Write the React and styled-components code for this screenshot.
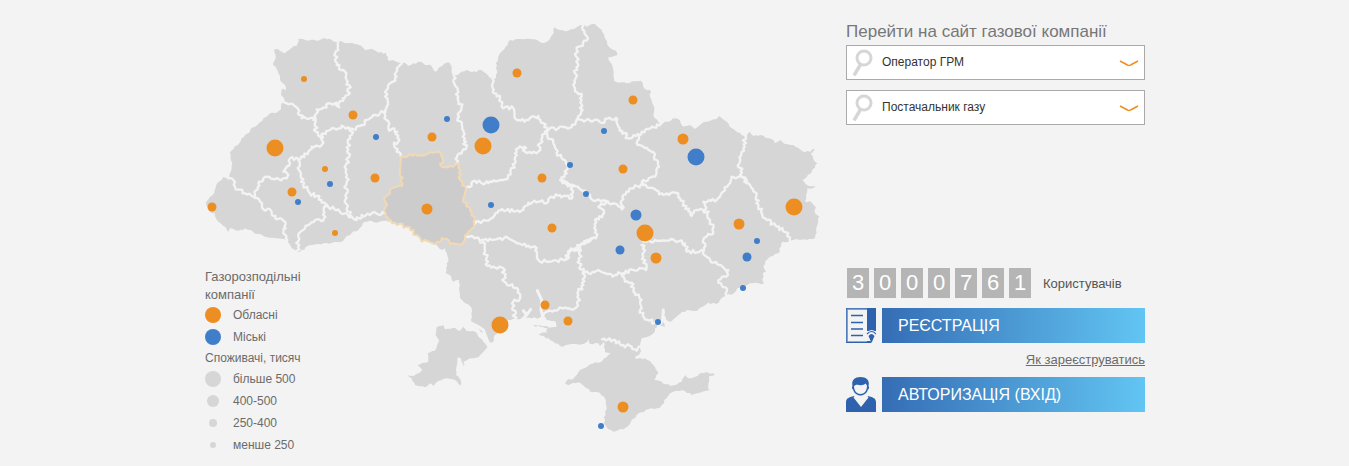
import React from "react";
import styled, { createGlobalStyle } from "styled-components";

const GlobalStyle = createGlobalStyle`
  * { box-sizing: border-box; }
  body {
    margin: 0;
    background: #f3f3f3;
    color: #6b6b6b;
    font-family: "Liberation Sans", Arial, sans-serif;
    font-size: 12px;
  }
`;

const Page = styled.main`
  display: grid;
  grid-template-columns: minmax(0, 616px) 299px;
  justify-content: space-between;
  max-width: 941px;
  margin: 0 auto;
  padding: 20px 0 10px;
`;

const MapPanel = styled.section`
  display: grid;
  align-items: start;
`;

const MapSvg = styled.svg`
  grid-area: 1 / 1;
  width: 100%;
  height: auto;
  margin-bottom: 16px;
`;

const Legend = styled.div`
  grid-area: 1 / 1;
  align-self: end;
  justify-self: start;
  width: 112px;
  padding-left: 1px;
`;

const LegendTitle = styled.h2`
  margin: 0;
  font-size: ${(p) => (p.$small ? 12 : 13)}px;
  font-weight: 400;
  line-height: ${(p) => (p.$small ? 20 : 18)}px;
`;

const LegendList = styled.ul`
  list-style: none;
  margin: 0;
  padding: 0;
`;

const LegendRow = styled.li`
  display: flex;
  align-items: center;
  gap: 12px;
  height: 22px;
  white-space: nowrap;
`;

const DotCell = styled.span`
  display: flex;
  justify-content: center;
  width: 16px;
`;

const Dot = styled.span`
  width: ${(p) => p.$size}px;
  height: ${(p) => p.$size}px;
  border-radius: 50%;
  background: ${(p) => p.$color};
`;

const Side = styled.aside`
  display: flex;
  flex-direction: column;
  justify-content: space-between;
  padding-bottom: 44px;
`;

const Pickers = styled.div`
  display: flex;
  flex-direction: column;
  gap: 10px;
`;

const Heading = styled.h1`
  margin: 0 0 -8px;
  font-size: 17px;
  font-weight: 400;
  line-height: 23px;
  color: #777;
  white-space: nowrap;
`;

const Picker = styled.label`
  display: grid;
  grid-template-columns: 36px 1fr 26px;
  align-items: center;
`;

const PickerSelect = styled.select`
  grid-area: 1 / 1 / 2 / 4;
  appearance: none;
  width: 100%;
  height: 35px;
  margin: 0;
  padding: 0 30px 2px 35px;
  border: 1px solid #aaa;
  border-radius: 0;
  background: #fff;
  color: #333;
  font: 12px "Liberation Sans", Arial, sans-serif;
`;

const PickerIcon = styled.svg`
  grid-row: 1;
  grid-column: ${(p) => p.$column};
  z-index: 1;
  justify-self: ${(p) => (p.$column === 1 ? "center" : "start")};
  pointer-events: none;
`;

const Account = styled.div`
  display: flex;
  flex-direction: column;
`;

const Counter = styled.div`
  display: flex;
  align-items: center;
  gap: 5px;
  padding: 0 0 10px 1px;
`;

const Digit = styled.span`
  width: 22px;
  height: 30px;
  background: #b5b5b5;
  color: #fff;
  font-size: 22px;
  line-height: 30px;
  text-align: center;
`;

const CounterLabel = styled.span`
  padding-left: 7px;
  font-size: 13px;
  color: #555;
`;

const ActionRow = styled.div`
  display: grid;
  grid-template-columns: 30px 1fr;
  gap: 6px;
`;

const ActionButton = styled.button`
  height: 35px;
  padding: 0 16px;
  border: 0;
  background: linear-gradient(90deg, #356db5, #62c5f2);
  color: #fff;
  font: 16px "Liberation Sans", Arial, sans-serif;
  text-align: left;
  cursor: pointer;
`;

const HelpLink = styled.a`
  align-self: flex-end;
  font-size: 13px;
  line-height: 34px;
  color: #6b6b6b;
`;

const ORANGE = "#ed8e22";
const BLUE = "#407ec9";
const LAND = "#d6d6d6";

// Outlines are stored in sheets of a third of a pixel; each has its own origin.
const SHEETS = { A: [0, 0], B: [540, 0], C: [1095, 0], D: [540, 600], E: [1035, 600] };

const points = (sheet, text) => {
  const [dx, dy] = SHEETS[sheet];
  return text.trim().split(/\s+/).map((pair) => {
    const [x, y] = pair.split(",").map(Number);
    return [x + dx, y + dy];
  });
};

// Breaks long strokes into short steps with a small wobble, like a surveyed border.
const roughen = (pts, amplitude, step) => {
  const out = [pts[0]];
  for (let i = 1; i < pts.length; i++) {
    const [x0, y0] = pts[i - 1];
    const [x1, y1] = pts[i];
    const length = Math.hypot(x1 - x0, y1 - y0);
    const n = Math.max(1, Math.round(length / step));
    for (let k = 1; k < n; k++) {
      const t = k / n;
      const x = x0 + (x1 - x0) * t;
      const y = y0 + (y1 - y0) * t;
      const noise = Math.sin(x * 12.9898 + y * 78.233) * 43758.5453;
      const r = (noise - Math.floor(noise) - 0.5) * 2 * amplitude;
      out.push([x - (r * (y1 - y0)) / length, y + (r * (x1 - x0)) / length]);
    }
    out.push(pts[i]);
  }
  return out;
};

const toPath = (pts, close) =>
  "M" + pts.map((p) => p.map(Math.round).join(" ")).join("L") + (close ? "Z" : "");

const outline = (parts, amplitude = 3) =>
  toPath(roughen(parts.flatMap(([s, t]) => points(s, t)), amplitude, 8), true);

const MAINLAND = outline([
  ["A", "32,550 45,530 58,518 64,495 85,470 97,475 104,462 110,445 108,405 104,398 175,322 220,285 225,280 245,278 258,268 264,245 270,240 258,225 260,208 272,212 270,195 258,185 250,160 240,138 234,135 242,115 238,88 255,92 270,100 290,84 305,78 310,57 330,60 365,62 390,55 410,60 425,66 437,63 450,70 470,68 500,78 510,90 530,86 550,98 573,98 578,120 600,123 620,128"],
  ["B", "80,130 90,128 100,137 115,130 137,125 150,135 170,138 180,155 195,140 222,127 230,140 232,163 248,165 260,155 275,150 290,157 320,150 333,160 345,175 360,178 365,150 362,130 375,100 388,88 400,65 420,58 445,58 480,58 500,68 520,62 532,45 537,22 555,30 580,32 605,22 620,14"],
  ["C", "80,20 105,12 125,30 133,50 145,78 168,92 172,105 145,112 160,150 162,182 200,190 242,182 252,205 270,210 270,230 283,262 280,285 300,312 322,305 345,295 360,302 370,320 390,315 405,327 420,315 440,305 468,298 478,288 500,305 515,325 545,345 560,350 570,335 580,348 610,347 635,357 645,370 662,360 675,372 700,375 720,388 735,397 765,387 752,402 772,430 755,455 728,480 745,498 768,500 742,505 735,543 755,547 768,562 765,580 778,590 770,620 765,655 740,660 700,660 690,662 668,665"],
  ["E", "728,65 715,100 690,110 675,125 672,145 678,155 668,162 672,190 630,190 605,200 592,205 582,220 565,222 540,240 528,252 505,248 478,265 472,272 440,270 415,285 400,298 388,305 378,298 372,270 365,268 366,295 375,320 362,318 345,325 342,338 318,352 305,355 300,385 300,400 285,415 315,415 335,430 355,460 343,480 365,485 392,498 425,485 437,465 445,475 465,470 485,458 505,458 525,465 508,468 505,490 508,510 480,518 455,525 435,513 410,512 390,520 380,535 365,555 360,563 325,568 290,585 270,612 250,628 220,635 205,628 192,610 195,575 200,560 195,535 180,518 158,517 140,505 122,490 100,488 85,496 75,490 80,483 105,470 120,450 150,433 175,428 200,412 212,400 195,397 192,365 180,378 175,370 150,372 147,355 135,370 100,372 70,380"],
  ["D", "540,370 520,355 500,347 475,345 515,338 518,325 495,320 475,316 530,322 545,320 543,305 515,300 508,290 495,292 470,295 440,297 420,298 400,300 375,330 360,345 357,360 347,368 330,345 310,325 290,308 290,265 265,245 255,235 252,180 235,185 225,165 212,158 215,130 220,115 210,85 195,88 180,70"],
  ["B", "140,650 125,645 95,620 60,608 40,603 5,608"],
  ["A", "530,603 510,605 490,630 470,640 450,655 435,667 370,672 345,675 315,695 305,697 290,685 275,660 240,655 190,642 150,625 130,632 105,625 100,635 80,612 65,600 60,580 45,575"],
]);

const BUDJAK = outline([
  ["D", "185,322 205,315 210,328 235,323 255,333 265,320 275,333 300,335 325,365 337,382 310,412 288,415 265,425 267,440 260,425 258,415 248,412 243,465 257,480 257,497 240,480 215,475 190,483 175,497 165,490 150,502 120,495 110,475 97,465 118,467 130,460 142,450 128,435 160,425 158,400 180,392 192,360 182,345"],
], 2);

const HIGHLIGHT = outline([
  ["B", "78,410 120,403 150,405 190,395 200,410 200,440 225,438 247,430 258,465 255,480 272,500 265,535 275,550 285,572 298,590 298,612 280,635 270,655 265,668 235,670 200,655 180,672 150,660 140,665 125,645 95,620 60,608 40,603 32,580 32,530 50,505 82,497 75,450"],
], 6);

const BORDERS = [
  ["A", "430,65 430,90 420,100 425,135 445,150 455,180 462,195 458,225 443,235 433,262 425,248 400,250 385,262 365,268 362,300 355,300"],
  ["A", "262,240 280,253 305,262 320,295 340,297 360,300 362,335 378,355"],
  ["A", "378,355 385,340 400,332 430,325 440,317 460,322 475,328 500,315 515,300 535,285 555,280 572,275"],
  ["A", "622,126 605,145 605,170 575,210 575,260 568,275 575,300 580,325 607,335 610,365 597,368 605,395 617,410"],
  ["A", "378,355 380,375 350,380 340,395 310,418 285,415 275,440 265,455 280,465 275,475 205,475 190,490 180,528"],
  ["A", "310,420 315,455 325,495 345,520 365,528 388,548 390,560 430,568 445,582 470,590"],
  ["A", "465,325 470,345 458,365 463,410 455,430 455,490 450,540 455,570 470,590 485,600 500,585 530,580 570,580"],
  ["A", "90,468 115,480 120,500 150,520 175,530 195,545 205,568 230,575 240,595 265,602 272,625 265,640 277,660"],
  ["A", "388,560 385,602 360,600 345,612 325,630 310,650 308,700"],
  ["B", "238,157 235,185 248,205 248,235 260,260 248,295 262,320 270,355 272,388 248,405 245,430"],
  ["B", "357,172 353,215 375,235 380,260 415,265 425,300 460,300 490,288 505,310 515,330"],
  ["B", "623,10 632,45 635,62 605,90 608,130 600,160 600,205 620,230 618,275 605,300 590,322 550,325 530,322 512,335"],
  ["B", "510,335 495,370 490,395 470,400 450,395 448,380 430,385 420,400 420,430 400,465 385,480 340,490 300,482 290,498 272,503"],
  ["B", "510,340 535,365 545,400 573,425 575,460 560,480 580,490 592,502 590,535"],
  ["B", "590,535 555,525 530,530 520,545 460,548 445,570 370,572 350,595 300,612"],
  ["B", "275,650 320,660 400,655 430,670 480,680 482,690"],
  ["D", "315,68 330,70 330,95 338,138 385,145 388,185 430,210 435,235 415,245 420,298"],
  ["D", "480,80 485,95 490,120 525,125 575,118 580,95 600,85 625,70 655,55"],
  ["D", "655,55 665,45 660,10 660,-10"],
  ["E", "105,85 118,85"],
  ["C", "50,298 90,302 120,307 168,293 175,320 205,355 240,345 255,330 303,312"],
  ["C", "235,345 233,375 270,392 290,420 297,440 285,470 250,480 252,495"],
  ["C", "0,480 30,497 75,512 95,538 130,540 160,550 185,568 190,525 215,505 250,495"],
  ["C", "250,495 280,505 310,525 355,520 370,550 395,588 410,570 445,575"],
  ["C", "435,570 430,545 470,540 490,515 510,490 515,470 540,470"],
  ["C", "557,345 550,385 538,430 545,470 560,490"],
  ["C", "545,470 565,490 590,520 595,560 620,600 650,620 685,640 692,665"],
  ["C", "445,575 450,605 460,635 430,660 432,690"],
  ["C", "145,545 115,560 132,580 105,600 108,655 80,660 60,685 30,690 20,715"],
  ["E", "310,65 345,60 375,62 400,58 435,70 440,95 490,93"],
  ["E", "490,93 510,120 565,150 560,170 535,180 560,215 550,235"],
  ["E", "118,85 118,145 145,160 175,150 200,162 225,165 280,150 318,150 310,110 315,90 305,75"],
  ["E", "250,160 255,185 275,188 280,215 305,240 300,270 312,292 345,308"],
  ["E", "130,155 130,195 112,220 120,240 105,265 60,262 30,272 10,290"],
  ["E", "186,358 220,360 250,375 275,380 290,392 304,380"],
].filter(([, t]) => !t.startsWith("655,55")).map(([s, t]) => toPath(roughen(points(s, t), 6, 6)));

const INLETS = [
  ["D", "487,212 500,240 498,270 505,298"],
  ["D", "445,272 455,285 467,268 455,285 440,300"],
  ["D", "290,310 310,320 325,330 337,362"],
  ["E", "370,270 368,300 355,320"],
].map(([s, t]) => toPath(points(s, t)));

// x, y, diameter, offset from the map's corner
const REGIONAL = [
  [109, 59, 6], [158, 95, 9], [80, 128, 17], [130, 149, 6], [97, 172, 9], [17, 187, 9],
  [140, 213, 6], [180, 158, 9], [237, 117, 9], [322, 53, 9], [288, 126, 17], [347, 158, 9],
  [232, 189, 11], [357, 208, 9], [438, 80, 9], [488, 119, 11], [428, 149, 9], [599, 187, 17],
  [544, 204, 11], [450, 213, 17], [461, 238, 11], [305, 305, 17], [350, 285, 9],
  [373, 301, 9], [428, 387, 11],
];

const CITY = [
  [181, 117, 6], [135, 164, 6], [103, 182, 6], [252, 99, 6], [296, 105, 17], [296, 185, 6],
  [409, 111, 6], [375, 145, 6], [391, 174, 6], [501, 137, 17], [441, 195, 11], [425, 230, 9],
  [562, 221, 6], [552, 237, 9], [548, 268, 6], [463, 302, 6], [406, 406, 6],
];

const Markers = ({ items, color }) =>
  items.map(([x, y, d]) => <circle key={`${x}-${y}`} cx={x} cy={y} r={d / 2} fill={color} />);

const GasMap = () => (
  <MapSvg viewBox="9 0 616 420" role="img" aria-label="Карта">
    <g transform="scale(0.33333)" strokeLinejoin="round" strokeLinecap="round">
      <path d={MAINLAND} fill={LAND} />
      <path d={BUDJAK} fill={LAND} />
      <g fill="none" stroke="#f3f3f3" strokeWidth="7">
        {BORDERS.map((d) => <path key={d} d={d} />)}
      </g>
      <g fill="none" stroke="#f3f3f3" strokeWidth="9">
        {INLETS.map((d) => <path key={d} d={d} />)}
      </g>
      <path d={HIGHLIGHT} fill="#ccc" stroke="#f2d9b5" strokeWidth="6" />
    </g>
    <Markers items={REGIONAL} color={ORANGE} />
    <Markers items={CITY} color={BLUE} />
  </MapSvg>
);

const OWNERS = [["Обласні", ORANGE], ["Міські", BLUE]];
const SIZES = [["більше 500", 16], ["400-500", 12], ["250-400", 8], ["менше 250", 6]];

const CompanyPicker = ({ label }) => (
  <Picker>
    <PickerSelect aria-label={label}>
      <option>{label}</option>
    </PickerSelect>
    <PickerIcon $column={1} width="24" height="27" viewBox="0 0 24 27" fill="none" stroke="#d6d6d6">
      <circle cx="12" cy="9" r="7" strokeWidth="3" />
      <path d="M8.500 15.500L2 26.500" strokeWidth="3.500" />
    </PickerIcon>
    <PickerIcon $column={3} width="20" height="8" viewBox="0 0 20 8" fill="none" stroke={ORANGE}>
      <path d="M1 2L8.500 6Q10 7 11.500 6L19 2" strokeWidth="1.500" />
    </PickerIcon>
  </Picker>
);

const FormIcon = () => (
  <svg width="30" height="35" viewBox="0 0 30 35" aria-hidden="true">
    <path d="M0 0H30V23H21V33H25L24 35H0Z" fill="#2e62ae" />
    <path d="M1.500 1.500H21V33.500H1.500Z" fill="#f3f3f3" />
    <path d="M1 34V1H21" fill="none" stroke="#7397c9" />
    <path d="M5 7.500H17M5 14.500H17M5 21H17M5 27.500H17" stroke="#2e62ae" strokeWidth="1.500" />
    <path d="M20.500 25Q25.500 19 30.500 25V35H27L25 30L22 28Z" fill="#f3f3f3" />
    <path d="M21 26Q25.500 21 30 26" fill="none" stroke="#2e62ae" strokeWidth="1.200" />
    <path d="M22.500 28Q25.500 24 28.500 28L25.500 35Z" fill="#2e62ae" />
    <path d="M21 34.500H25" stroke="#2e62ae" />
  </svg>
);

const PersonIcon = () => (
  <svg width="30" height="35" viewBox="0 0 30 35" aria-hidden="true" fill="#2e62ae">
    <path d="M6.500 9C5 3 9 0 14.500 0S24 3 22.500 9C23.500 10 23 12 22 12.500C21 16 18 18.500 14.500 18.500S8 16 7 12.500C6 12 5.500 10 6.500 9Z" />
    <path d="M8 9C10 7.500 11 7.500 13 8C16 8.500 18 8 19.500 6.500Q20.500 7 21 9C21 14 18 17 14.500 17S8 14 8 9Z" fill="#f3f3f3" />
    <path d="M0 35V25C0 21 4 20 8 19L15 28L22 19C26 20 30 21 30 25V35Z" />
    <path d="M9 19L15 26L21 19L22.500 20.500L15 30L7.500 20.500Z" fill="#f3f3f3" />
  </svg>
);

export default function App() {
  return (
    <>
      <GlobalStyle />
      <Page>
        <MapPanel>
          <GasMap />
          <Legend>
            <LegendTitle>Газорозподільні компанії</LegendTitle>
            <LegendList>
              {OWNERS.map(([name, color]) => (
                <LegendRow key={name}>
                  <DotCell><Dot $size={16} $color={color} /></DotCell>
                  {name}
                </LegendRow>
              ))}
            </LegendList>
            <LegendTitle $small>Споживачі, тисяч</LegendTitle>
            <LegendList>
              {SIZES.map(([name, size]) => (
                <LegendRow key={name}>
                  <DotCell><Dot $size={size} $color={LAND} /></DotCell>
                  {name}
                </LegendRow>
              ))}
            </LegendList>
          </Legend>
        </MapPanel>
        <Side>
          <Pickers>
            <Heading>Перейти на сайт газової компанії</Heading>
            <CompanyPicker label="Оператор ГРМ" />
            <CompanyPicker label="Постачальник газу" />
          </Pickers>
          <Account>
            <Counter>
              {[..."3000761"].map((digit, i) => <Digit key={i}>{digit}</Digit>)}
              <CounterLabel>Користувачів</CounterLabel>
            </Counter>
            <ActionRow>
              <FormIcon />
              <ActionButton type="button">РЕЄСТРАЦІЯ</ActionButton>
            </ActionRow>
            <HelpLink href="#help">Як зареєструватись</HelpLink>
            <ActionRow>
              <PersonIcon />
              <ActionButton type="button">АВТОРИЗАЦІЯ (ВХІД)</ActionButton>
            </ActionRow>
          </Account>
        </Side>
      </Page>
    </>
  );
}
